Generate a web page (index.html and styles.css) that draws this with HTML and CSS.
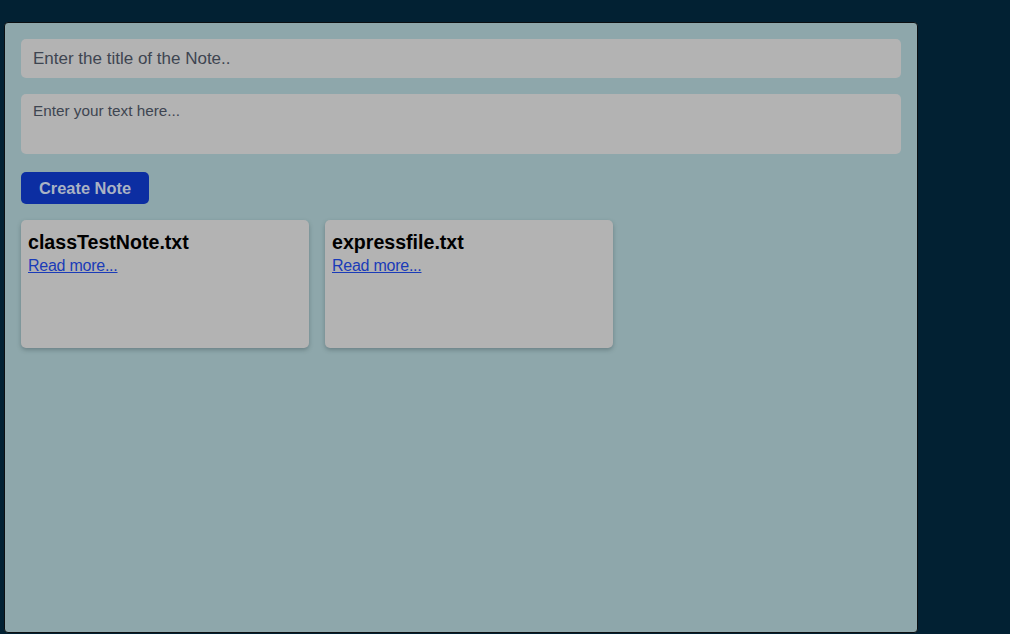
FILE: index.html
```html
<!DOCTYPE html>
<html>
<head>
<meta charset="utf-8">
<link rel="stylesheet" href="styles.css">
</head>
<body>
<div class="panel">
  <input class="title-input" type="text" placeholder="Enter the title of the Note..">
  <textarea class="text-input" placeholder="Enter your text here..."></textarea>
  <div class="actions"><button class="create-btn">Create Note</button></div>
  <div class="notes">
    <div class="note">
      <h3 class="note-title">classTestNote.txt</h3>
      <a class="note-link" href="#">Read more...</a>
    </div>
    <div class="note">
      <h3 class="note-title">expressfile.txt</h3>
      <a class="note-link" href="#">Read more...</a>
    </div>
  </div>
</div>
</body>
</html>
```
FILE: styles.css
```css
html, body {
  margin: 0;
  padding: 0;
  background: #022133;
  font-family: "Liberation Sans", Arial, sans-serif;
}
body {
  padding: 22px 0 0 4px;
  height: 634px;
  box-sizing: border-box;
  overflow: hidden;
}
.panel {
  width: 914px;
  height: 611px;
  box-sizing: border-box;
  background: #8ea7ab;
  border: 1px solid #0b0f12;
  border-radius: 4px;
  padding: 16px;
  display: flex;
  flex-direction: column;
}
.title-input, .text-input {
  display: block;
  width: 100%;
  box-sizing: border-box;
  border: none;
  outline: none;
  background: #b3b3b3;
  border-radius: 5px;
  font-family: "Liberation Sans", Arial, sans-serif;
  color: #3e4551;
}
.title-input {
  height: 39px;
  padding: 0 12px;
  font-size: 17px;
}
.text-input {
  margin-top: 16px;
  height: 60px;
  padding: 8px 12px;
  font-size: 15.3px;
  resize: none;
}
.title-input::placeholder, .text-input::placeholder {
  color: #3e4551;
  opacity: 1;
}
.actions {
  margin-top: 18px;
  display: flex;
}
.create-btn {
  height: 32px;
  width: 128px;
  border: none;
  border-radius: 5px;
  background: #0c2ea2;
  color: #aab3c4;
  font-family: "Liberation Sans", Arial, sans-serif;
  font-weight: bold;
  font-size: 16.4px;
  padding: 0;
}
.notes {
  margin-top: 16px;
  display: flex;
  gap: 16px;
}
.note {
  width: 288px;
  height: 128px;
  box-sizing: border-box;
  background: #b3b3b3;
  border-radius: 5px;
  padding: 10px 7px;
  box-shadow: 0 2px 4px rgba(40, 60, 65, 0.35);
}
.note-title {
  margin: 0;
  font-size: 19.6px;
  font-weight: bold;
  color: #000;
  line-height: 24px;
}
.note-link {
  display: inline-block;
  margin-top: 3px;
  font-size: 16px;
  letter-spacing: -0.25px;
  color: #1a3bb8;
  text-decoration: underline;
}
```
